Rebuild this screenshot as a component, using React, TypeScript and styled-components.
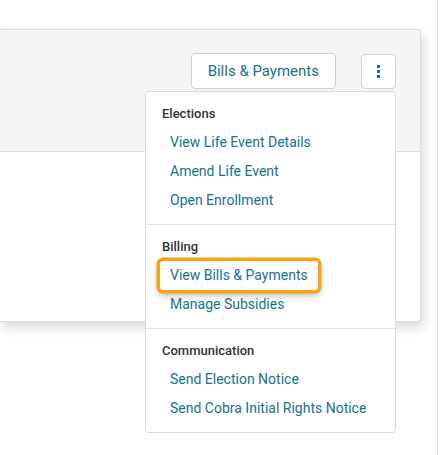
import React from 'react'
import styled, { createGlobalStyle } from 'styled-components'

const GlobalStyle = createGlobalStyle`
  html, body {
    margin: 0;
    padding: 0;
    background: #fff;
  }
  body {
    font-family: Roboto, 'Liberation Sans', Arial, sans-serif;
    -webkit-font-smoothing: antialiased;
  }
`

const Page = styled.div`
  width: 443px;
  height: 455px;
  overflow: hidden;
  display: flex;
`

const Main = styled.div`
  width: 438px;
  height: 100%;
  border-right: 1px solid #e2e2e2;
  box-sizing: border-box;
  padding-top: 29px;
`

const Card = styled.div`
  width: 421px;
  background: #fff;
  border: 1px solid #dcdcdc;
  border-left: none;
  border-radius: 0 4px 4px 0;
  box-shadow: 2px 5px 12px rgba(0, 0, 0, 0.16);
  box-sizing: border-box;
`

const CardHeader = styled.div`
  height: 122px;
  background: #f5f5f5;
  border-bottom: 1px solid #dcdcdc;
  border-radius: 0 4px 0 0;
  box-sizing: border-box;
  display: flex;
  justify-content: flex-end;
  align-items: flex-start;
  gap: 25px;
  padding: 23px 24px 0 0;
`

const CardBody = styled.div`
  height: 169px;
`

const Button = styled.button`
  height: 36px;
  padding: 0 16px;
  background: #fff;
  border: 1px solid #cfcfcf;
  border-radius: 4px;
  color: #17728c;
  font-family: Roboto, 'Liberation Sans', Arial, sans-serif;
  font-size: 15px;
  cursor: pointer;
`

const MenuWrap = styled.div`
  position: relative;
`

const KebabButton = styled.button`
  width: 35px;
  height: 35px;
  margin-top: 1px;
  padding: 0;
  background: #fff;
  border: 1px solid #cfcfcf;
  border-radius: 4px;
  display: flex;
  flex-direction: column;
  align-items: center;
  justify-content: center;
  gap: 2px;
  cursor: pointer;

  span {
    width: 3px;
    height: 3px;
    background: #17728c;
  }
`

const Menu = styled.div`
  position: absolute;
  top: 38px;
  right: 0;
  width: 251px;
  background: #fff;
  border: 1px solid #dadada;
  border-radius: 4px;
  box-sizing: border-box;
  z-index: 10;
`

const Section = styled.div`
  padding: 12px 0 9px;
  & + & {
    border-top: 1px solid #e3e3e3;
  }
`

const SectionTitle = styled.div`
  height: 20px;
  line-height: 20px;
  margin: 0 0 4px 16px;
  font-size: 13px;
  font-weight: 500;
  color: #333;
`

const Item = styled.div`
  height: 29px;
  padding-left: 14px;
`

const ItemLink = styled.a<{ $focused?: boolean }>`
  display: inline-block;
  height: 29px;
  line-height: 29px;
  padding: 0 10px;
  font-size: 14px;
  color: #17728c;
  text-decoration: none;
  border-radius: 3px;
  box-shadow: ${p =>
    p.$focused
      ? '0 0 0 3.5px #f4a514, 0 3px 7px 2px rgba(0, 0, 0, 0.3)'
      : 'none'};
`

const sections = [
  {
    title: 'Elections',
    items: ['View Life Event Details', 'Amend Life Event', 'Open Enrollment']
  },
  {
    title: 'Billing',
    items: ['View Bills & Payments', 'Manage Subsidies']
  },
  {
    title: 'Communication',
    items: ['Send Election Notice', 'Send Cobra Initial Rights Notice']
  }
]

const App: React.FC = () => {
  return (
    <Page>
      <GlobalStyle />
      <Main>
        <Card>
          <CardHeader>
            <Button>Bills &amp; Payments</Button>
            <MenuWrap>
              <KebabButton aria-label="More actions">
                <span />
                <span />
                <span />
              </KebabButton>
              <Menu>
                {sections.map(section => (
                  <Section key={section.title}>
                    <SectionTitle>{section.title}</SectionTitle>
                    {section.items.map(item => (
                      <Item key={item}>
                        <ItemLink href="#" $focused={item === 'View Bills & Payments'}>
                          {item}
                        </ItemLink>
                      </Item>
                    ))}
                  </Section>
                ))}
              </Menu>
            </MenuWrap>
          </CardHeader>
          <CardBody />
        </Card>
      </Main>
    </Page>
  )
}

export default App
